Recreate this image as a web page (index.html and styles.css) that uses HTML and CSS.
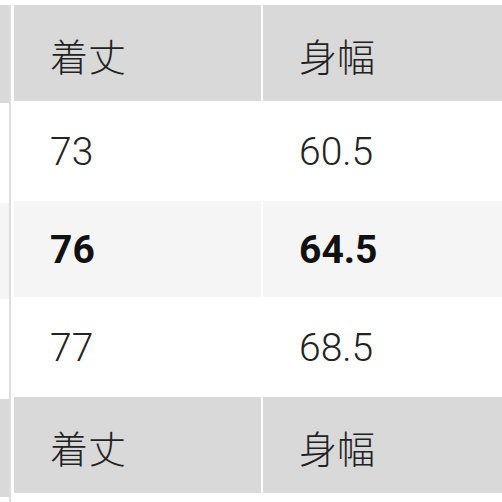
FILE: index.html
```html
<!DOCTYPE html>
<html lang="ja">
<head>
<meta charset="utf-8">
<title>サイズ表</title>
<link rel="stylesheet" href="styles.css">
</head>
<body>
<div class="scroller">
  <div class="stub">
    <div class="stub-cell head"></div>
    <div class="stub-cell"></div>
    <div class="stub-cell hl"></div>
    <div class="stub-cell"></div>
    <div class="stub-cell head"></div>
  </div>
  <div class="size-table">
    <div class="cell head">着丈</div>
    <div class="cell head">身幅</div>
    <div class="cell">73</div>
    <div class="cell">60.5</div>
    <div class="cell hl bold">76</div>
    <div class="cell hl bold">64.5</div>
    <div class="cell">77</div>
    <div class="cell">68.5</div>
    <div class="cell head">着丈</div>
    <div class="cell head">身幅</div>
  </div>
</div>
</body>
</html>
```
FILE: styles.css
```css
html, body {
  margin: 0;
  padding: 0;
  background: #ffffff;
  overflow: hidden;
}

.scroller {
  display: flex;
  align-items: stretch;
  width: 502px;
  height: 502px;
  overflow: hidden;
  font-family: Roboto, "Noto Sans CJK JP", sans-serif;
  color: #222222;
}

.stub {
  flex: 0 0 9px;
  margin-top: 5px;
  display: flex;
  flex-direction: column;
  gap: 2px;
  border-right: 2px solid #dedede;
}

.stub-cell {
  height: 96px;
  flex: 0 0 96px;
}

.size-table {
  flex: 0 0 auto;
  margin-top: 5px;
  margin-left: 3px;
  display: grid;
  grid-template-columns: 247px 260px;
  grid-auto-rows: 96px;
  gap: 2px;
  align-content: start;
}

.cell {
  display: flex;
  align-items: center;
  padding-left: 36px;
  padding-top: 1px;
  font-size: 39px;
  font-weight: 300;
  box-sizing: border-box;
}

.head {
  background: #d9d9d9;
  font-size: 38px;
  padding-top: 2px;
}

.hl {
  background: #f5f5f5;
}

.bold {
  font-weight: 700;
  color: #111111;
}
```
